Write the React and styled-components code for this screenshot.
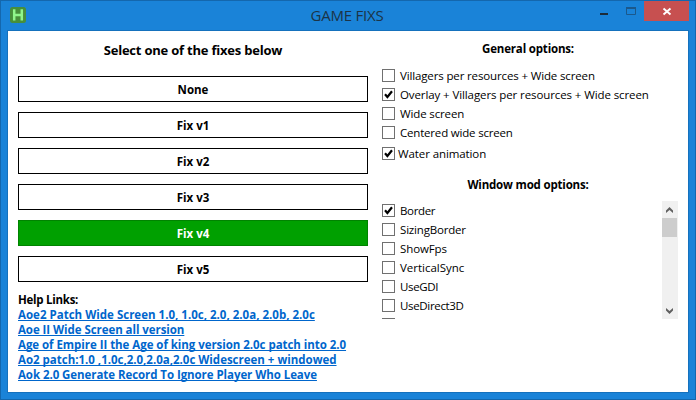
import React from "react";
import styled, { createGlobalStyle } from "styled-components";

const GlobalStyle = createGlobalStyle`
  *, *::before, *::after { box-sizing: border-box; }
  body { margin: 0; overflow: hidden; }
`;

const Window = styled.div`
  display: flex;
  flex-direction: column;
  width: 696px;
  height: 400px;
  padding: 0 6px 6px;
  border: 1px solid #1467ad;
  background: #1a83d8;
  color: #000;
  font: 400 11.5px/15px "Open Sans", "Noto Sans", sans-serif;
`;

const TitleBar = styled.header`
  display: grid;
  grid-template-columns: 84px 1fr 84px;
  flex: none;
  height: 29px;
`;

const AppIcon = styled.svg`
  margin: 6px 0 0 3px;
`;

const Title = styled.h1`
  margin: 0 0 0 -2px;
  color: #1c3346;
  font-size: 15px;
  font-weight: 400;
  line-height: 29px;
  letter-spacing: -0.2px;
  text-align: center;
`;

const WindowControls = styled.div`
  display: flex;
  justify-content: flex-end;
`;

const ControlButton = styled.button`
  display: flex;
  flex: none;
  width: ${(p) => (p.$close ? 45 : 27)}px;
  height: 20px;
  padding: 0;
  border: 0;
  background: ${(p) => (p.$close ? "#c75050" : "transparent")};
`;

const Client = styled.main`
  display: flex;
  flex: 1;
  min-height: 0;
  padding: 0 9px 0 10px;
  border: 1px solid #1571bd;
  background: #fff;
`;

const FixPanel = styled.section`
  width: 350px;
`;

const OptionsPanel = styled.section`
  width: 296px;
  margin-left: 14px;
`;

const Heading = styled.h2`
  margin: 0;
  font-size: 13px;
  font-weight: 700;
  line-height: 18px;
  letter-spacing: -0.21px;
  padding: 10px 0 17px;
  text-align: center;
`;

const GroupHeading = styled.h3`
  margin: 0;
  padding-top: ${(p) => p.$top}px;
  padding-right: 4px;
  font-size: inherit;
  font-weight: 700;
  letter-spacing: -0.18px;
  text-align: center;
`;

const FixList = styled.div`
  display: grid;
  gap: 10px;
`;

const FixButton = styled.button`
  height: 26px;
  padding: 1px 0 0;
  border: 1px solid ${(p) => (p.$active ? "#008300" : "#000")};
  background: ${(p) => (p.$active ? "#00a000" : "#fff")};
  color: ${(p) => (p.$active ? "#fff" : "#000")};
  font: inherit;
  font-weight: 700;
`;

const HelpLinks = styled.nav`
  display: flex;
  flex-direction: column;
  align-items: flex-start;
  margin-top: 10px;
  font-weight: 700;
`;

const HelpTitle = styled.span`
  letter-spacing: -0.27px;
`;

const HelpLink = styled.a`
  color: #0066cc;
  letter-spacing: ${(p) => p.$track}px;
  text-decoration: underline;
  text-decoration-thickness: 1px;
  text-underline-offset: 1px;
  text-decoration-skip-ink: none;
  white-space: pre;
`;

const OptionList = styled.div`
  display: grid;
  gap: 6px;
  margin-top: ${(p) => p.$top}px;
`;

const Option = styled.label`
  display: flex;
  gap: ${(p) => (p.$tight ? 3 : 5)}px;
  height: 13px;
  line-height: 13px;
  letter-spacing: ${(p) => p.$track}px;
  white-space: pre;
`;

const Box = styled.span`
  display: flex;
  flex: none;
  width: 13px;
  height: 13px;
  border: 1px solid #707070;
  background: #fff;
`;

const ScrollArea = styled.div`
  display: flex;
  justify-content: space-between;
  height: 118px;
  margin-top: 9px;
  overflow: hidden;
`;

const ScrollBar = styled.div`
  display: flex;
  flex-direction: column;
  justify-content: space-between;
  width: 16px;
  background: #f0f0f0;
`;

const Thumb = styled.div`
  width: 15px;
  height: 19px;
  margin-bottom: auto;
  background: #cdcdcd;
`;

const fixes = ["None", "Fix v1", "Fix v2", "Fix v3", "Fix v4", "Fix v5"];

const links = [
  ["Aoe2 Patch Wide Screen 1.0, 1.0c, 2.0, 2.0a, 2.0b, 2.0c", 0.01],
  ["Aoe II Wide Screen all version", -0.06],
  ["Age of Empire II the Age of king version 2.0c patch into 2.0", -0.045],
  ["Ao2 patch:1.0 ,1.0c,2.0,2.0a,2.0c Widescreen + windowed", -0.01],
  ["Aok 2.0 Generate Record To Ignore Player Who Leave", -0.066],
];

const generalOptions = [
  ["Villagers per resources + Wide screen", false, -0.14],
  ["Overlay + Villagers per resources + Wide screen", true, -0.1],
  ["Wide screen", false, -0.14],
  ["Centered wide screen", false, -0.19],
];

const windowOptions = [
  ["Border", true, -0.35],
  ["SizingBorder", false, -0.18],
  ["ShowFps", false, -0.1],
  ["VerticalSync", false, -0.02],
  ["UseGDI", false, -0.36],
  ["UseDirect3D", false, -0.33],
  ["", false, 0],
];

function CheckOption({ label, checked, track, tight }) {
  return (
    <Option $track={track} $tight={tight}>
      <Box>
        {checked && (
          <svg width="11" height="11" viewBox="0 0 11 11">
            <path d="M2 5.2 4.4 8 9 2.3" fill="none" stroke="#000" strokeWidth="2.2" />
          </svg>
        )}
      </Box>
      {label}
    </Option>
  );
}

function Arrow({ down }) {
  return (
    <svg width="16" height="17" viewBox="0 0 16 17">
      <path
        d={down ? "M4 6 7.5 9 11 6V8.5L7.5 12 4 8.5Z" : "M4 9.5 7.5 6 11 9.5V12L7.5 9 4 12Z"}
        fill="#606060"
      />
    </svg>
  );
}

export default function App() {
  return (
    <>
      <GlobalStyle />
      <Window>
        <TitleBar>
          <AppIcon width="16" height="16" viewBox="0 0 16 16">
            <rect width="16" height="16" rx="2.5" fill="#478f3b" />
            <path d="M4.2 2.2v11.3M11.8 2.2v11.3M4 8h8" stroke="#8ff58b" strokeWidth="2.5" fill="none" />
          </AppIcon>
          <Title>GAME FIXS</Title>
          <WindowControls>
            <ControlButton aria-label="Minimize">
              <svg width="27" height="20"><path d="M10 12h8v2h-8z" fill="#1c2b38" /></svg>
            </ControlButton>
            <ControlButton aria-label="Maximize">
              <svg width="27" height="20">
                <path d="M9.5 7v6.5h9V7" fill="none" stroke="#1b588b" />
                <path d="M9 6h10v2H9z" fill="#1b588b" />
              </svg>
            </ControlButton>
            <ControlButton $close aria-label="Close">
              <svg width="45" height="20">
                <path d="m19.5 7.5 7 6m0-6-7 6" stroke="#fff" strokeWidth="1.9" />
              </svg>
            </ControlButton>
          </WindowControls>
        </TitleBar>
        <Client>
          <FixPanel>
            <Heading>Select one of the fixes below</Heading>
            <FixList>
              {fixes.map((fix) => (
                <FixButton key={fix} $active={fix === "Fix v4"}>{fix}</FixButton>
              ))}
            </FixList>
            <HelpLinks>
              <HelpTitle>Help Links:</HelpTitle>
              {links.map(([text, track]) => (
                <HelpLink key={text} $track={track}>{text}</HelpLink>
              ))}
            </HelpLinks>
          </FixPanel>
          <OptionsPanel>
            <GroupHeading $top={10}>General options:</GroupHeading>
            <OptionList $top={13}>
              {generalOptions.map(([label, checked, track]) => (
                <CheckOption key={label} label={label} checked={checked} track={track} />
              ))}
            </OptionList>
            <OptionList $top={8}>
              <CheckOption label="Water animation" checked tight track={-0.1} />
            </OptionList>
            <GroupHeading $top={17}>Window mod options:</GroupHeading>
            <ScrollArea>
              <OptionList $top={3}>
                {windowOptions.map(([label, checked, track]) => (
                  <CheckOption key={label} label={label} checked={checked} track={track} />
                ))}
              </OptionList>
              <ScrollBar>
                <Arrow />
                <Thumb />
                <Arrow down />
              </ScrollBar>
            </ScrollArea>
          </OptionsPanel>
        </Client>
      </Window>
    </>
  );
}
